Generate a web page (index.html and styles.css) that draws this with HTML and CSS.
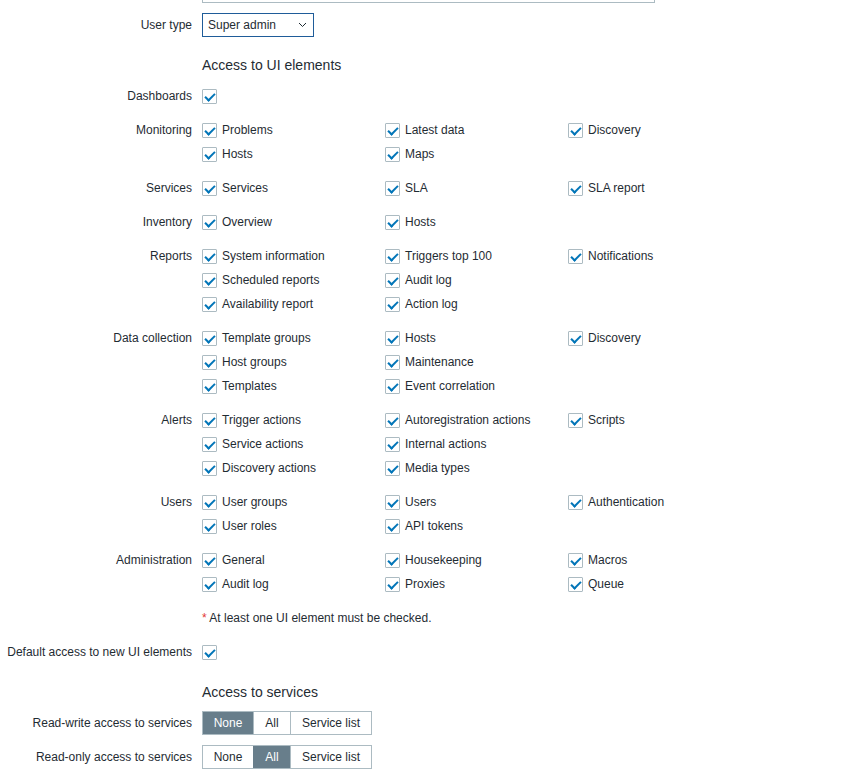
FILE: index.html
```html
<!DOCTYPE html>
<html>
<head>
<meta charset="utf-8">
<link rel="stylesheet" href="styles.css">
</head>
<body>
<form class="form">
  <div class="row"><div class="label"></div><div class="field"><div class="textbox"></div></div></div>

  <div class="row">
    <div class="label">User type</div>
    <div class="field">
      <div class="select">Super admin
        <svg class="chev" width="9" height="6" viewBox="0 0 9 6"><path d="M1 1l3.5 3.5L8 1" fill="none" stroke="#1f2c33" stroke-width="1"/></svg>
      </div>
    </div>
  </div>

  <div class="row head"><div class="label"></div><div class="field title">Access to UI elements</div></div>

  <div class="row"><div class="label">Dashboards</div><div class="field"><span class="cb"></span></div></div>

  <div class="row"><div class="label">Monitoring</div><div class="field grid">
    <div class="item"><span class="cb"></span>Problems</div>
    <div class="item"><span class="cb"></span>Latest data</div>
    <div class="item"><span class="cb"></span>Discovery</div>
    <div class="item"><span class="cb"></span>Hosts</div>
    <div class="item"><span class="cb"></span>Maps</div>
  </div></div>

  <div class="row"><div class="label">Services</div><div class="field grid">
    <div class="item"><span class="cb"></span>Services</div>
    <div class="item"><span class="cb"></span>SLA</div>
    <div class="item"><span class="cb"></span>SLA report</div>
  </div></div>

  <div class="row"><div class="label">Inventory</div><div class="field grid">
    <div class="item"><span class="cb"></span>Overview</div>
    <div class="item"><span class="cb"></span>Hosts</div>
  </div></div>

  <div class="row"><div class="label">Reports</div><div class="field grid">
    <div class="item"><span class="cb"></span>System information</div>
    <div class="item"><span class="cb"></span>Triggers top 100</div>
    <div class="item"><span class="cb"></span>Notifications</div>
    <div class="item"><span class="cb"></span>Scheduled reports</div>
    <div class="item"><span class="cb"></span>Audit log</div>
    <div class="item"></div>
    <div class="item"><span class="cb"></span>Availability report</div>
    <div class="item"><span class="cb"></span>Action log</div>
  </div></div>

  <div class="row"><div class="label">Data collection</div><div class="field grid">
    <div class="item"><span class="cb"></span>Template groups</div>
    <div class="item"><span class="cb"></span>Hosts</div>
    <div class="item"><span class="cb"></span>Discovery</div>
    <div class="item"><span class="cb"></span>Host groups</div>
    <div class="item"><span class="cb"></span>Maintenance</div>
    <div class="item"></div>
    <div class="item"><span class="cb"></span>Templates</div>
    <div class="item"><span class="cb"></span>Event correlation</div>
  </div></div>

  <div class="row"><div class="label">Alerts</div><div class="field grid">
    <div class="item"><span class="cb"></span>Trigger actions</div>
    <div class="item"><span class="cb"></span>Autoregistration actions</div>
    <div class="item"><span class="cb"></span>Scripts</div>
    <div class="item"><span class="cb"></span>Service actions</div>
    <div class="item"><span class="cb"></span>Internal actions</div>
    <div class="item"></div>
    <div class="item"><span class="cb"></span>Discovery actions</div>
    <div class="item"><span class="cb"></span>Media types</div>
  </div></div>

  <div class="row"><div class="label">Users</div><div class="field grid">
    <div class="item"><span class="cb"></span>User groups</div>
    <div class="item"><span class="cb"></span>Users</div>
    <div class="item"><span class="cb"></span>Authentication</div>
    <div class="item"><span class="cb"></span>User roles</div>
    <div class="item"><span class="cb"></span>API tokens</div>
  </div></div>

  <div class="row"><div class="label">Administration</div><div class="field grid">
    <div class="item"><span class="cb"></span>General</div>
    <div class="item"><span class="cb"></span>Housekeeping</div>
    <div class="item"><span class="cb"></span>Macros</div>
    <div class="item"><span class="cb"></span>Audit log</div>
    <div class="item"><span class="cb"></span>Proxies</div>
    <div class="item"><span class="cb"></span>Queue</div>
  </div></div>

  <div class="row"><div class="label"></div><div class="note"><span class="req">*</span> At least one UI element must be checked.</div></div>

  <div class="row"><div class="label">Default access to new UI elements</div><div class="field"><span class="cb"></span></div></div>

  <div class="row head"><div class="label"></div><div class="field title">Access to services</div></div>

  <div class="row"><div class="label">Read-write access to services</div><div class="field">
    <div class="seg"><span class="opt w-none on">None</span><span class="opt w-all">All</span><span class="opt w-list">Service list</span></div>
  </div></div>

  <div class="row"><div class="label">Read-only access to services</div><div class="field">
    <div class="seg"><span class="opt w-none">None</span><span class="opt w-all on">All</span><span class="opt w-list">Service list</span></div>
  </div></div>
</form>
</body>
</html>
```

FILE: styles.css
```css
html, body {
  margin: 0;
  padding: 0;
  background: #ffffff;
}
body {
  font-family: "Liberation Sans", Arial, sans-serif;
  font-size: 12px;
  color: #1f2c33;
  width: 855px;
  height: 778px;
  overflow: hidden;
}
.form {
  margin-top: -21px;
  display: flex;
  flex-direction: column;
  gap: 10px;
}
.row {
  display: flex;
  align-items: flex-start;
}
.label {
  width: 192px;
  padding-right: 10px;
  text-align: right;
  line-height: 24px;
  white-space: nowrap;
  flex: none;
}
.field {
  line-height: 24px;
  min-height: 24px;
  display: flex;
  align-items: center;
}
.note {
  line-height: 24px;
  white-space: nowrap;
}
.textbox {
  width: 451px;
  height: 22px;
  border: 1px solid #acbbc2;
}
.select {
  box-sizing: border-box;
  width: 112px;
  height: 24px;
  border: 1px solid #1f5c99;
  padding-left: 5px;
  line-height: 22px;
  position: relative;
}
.chev {
  position: absolute;
  right: 6px;
  top: 8px;
}
.head .label { line-height: 17px; }
.title {
  font-size: 14px;
  padding-top: 10px;
  line-height: 17px;
  min-height: 17px;
}
.grid {
  display: grid;
  grid-template-columns: 183px 183px 183px;
}
.item {
  display: flex;
  align-items: center;
  height: 24px;
  white-space: nowrap;
}
.cb {
  box-sizing: border-box;
  width: 15px;
  height: 15px;
  border: 1px solid #acbbc2;
  border-radius: 1px;
  background: #fff;
  margin-right: 5px;
  position: relative;
  display: inline-block;
  flex: none;
}
.cb::after {
  content: "";
  position: absolute;
  left: 4px;
  top: 1px;
  width: 4px;
  height: 8px;
  border-right: 2px solid #0275b8;
  border-bottom: 2px solid #0275b8;
  transform: rotate(45deg);
}
.req {
  color: #e33734;
}
.seg {
  display: flex;
  height: 24px;
  box-sizing: border-box;
  border: 1px solid #acbbc2;
}
.opt {
  box-sizing: border-box;
  text-align: center;
  line-height: 22px;
  border-left: 1px solid #acbbc2;
}
.opt:first-child { border-left: none; }
.opt.on {
  background: #687e8b;
  color: #ffffff;
  border-color: #687e8b;
}
.w-none { width: 50px; }
.w-all { width: 37px; }
.w-list { width: 81px; }
```
